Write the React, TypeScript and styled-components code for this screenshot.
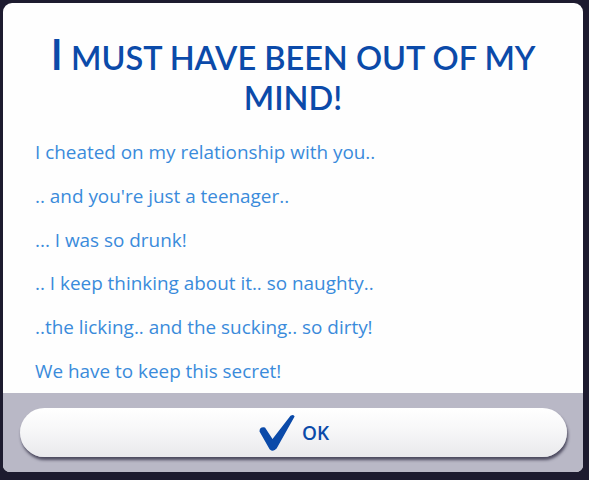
import React from "react";
import styled, { createGlobalStyle } from "styled-components";

const Global = createGlobalStyle`
  html, body {
    margin: 0;
    padding: 0;
    background: #1d1b2f;
  }
  body {
    width: 589px;
    height: 480px;
    overflow: hidden;
  }
`;

const Screen = styled.div`
  width: 589px;
  height: 480px;
  box-sizing: border-box;
  padding: 3px 6px 8px 3px;
  display: flex;
`;

const Dialog = styled.div`
  flex: 1;
  display: flex;
  flex-direction: column;
  background: #fefefe;
  border-radius: 9px 9px 7px 7px;
  overflow: hidden;
`;

const Content = styled.div`
  flex: 1;
  display: flex;
  flex-direction: column;
  padding: 31px 32px 0 32px;
`;

const Title = styled.h1`
  margin: 0;
  text-align: center;
  font-family: "Lato", "Open Sans", sans-serif;
  font-weight: 600;
  font-size: 32.5px;
  line-height: 40px;
  text-transform: uppercase;
  color: #0b4aa9;
`;

const Initial = styled.span`
  font-size: 43px;
`;

const Lines = styled.div`
  margin-top: 22px;
  display: flex;
  flex-direction: column;
  gap: 19.8px;
`;

const Line = styled.p`
  margin: 0;
  font-family: "Open Sans", sans-serif;
  font-size: 18.9px;
  line-height: 24px;
  color: #3a8bdb;
`;

const Footer = styled.div`
  height: 79px;
  box-sizing: border-box;
  background: #b9b8c6;
  padding: 15px 16px 15px 17px;
  display: flex;
`;

const OkButton = styled.button`
  flex: 1;
  display: flex;
  align-items: center;
  justify-content: center;
  gap: 6px;
  border: none;
  border-radius: 25px;
  background: linear-gradient(#ffffff 0%, #f7f7f8 45%, #e9e9ec 100%);
  box-shadow: 1px 3px 3px rgba(40, 38, 60, 0.75);
  font-family: "Open Sans", sans-serif;
  font-weight: 600;
  font-size: 19px;
  color: #0b4aa9;
  padding: 0;
  cursor: pointer;
`;

// Brush-style tick: a rounded short arm and a long arm tapering to a point
const CheckIcon = () => (
  <svg width="38" height="38" viewBox="0 0 38 38" aria-hidden="true">
    <path
      d="M1.5 17.5 Q1.5 12.5 7 13.5 L14.5 25 L32.5 1.8 Q35.8 -0.2 36.6 2.6 L18.6 34.6 Q15.2 38.6 11.6 35.2 Z"
      fill="#0b4aa9"
    />
  </svg>
);

const messages = [
  "I cheated on my relationship with you..",
  ".. and you're just a teenager..",
  "... I was so drunk!",
  ".. I keep thinking about it.. so naughty..",
  "..the licking.. and the sucking.. so dirty!",
  "We have to keep this secret!",
];

export default function App() {
  return (
    <>
      <Global />
      <Screen>
        <Dialog>
          <Content>
            <Title>
              <Initial>I</Initial> must have been out of my mind!
            </Title>
            <Lines>
              {messages.map((m) => (
                <Line key={m}>{m}</Line>
              ))}
            </Lines>
          </Content>
          <Footer>
            <OkButton>
              <CheckIcon />
              OK
            </OkButton>
          </Footer>
        </Dialog>
      </Screen>
    </>
  );
}
